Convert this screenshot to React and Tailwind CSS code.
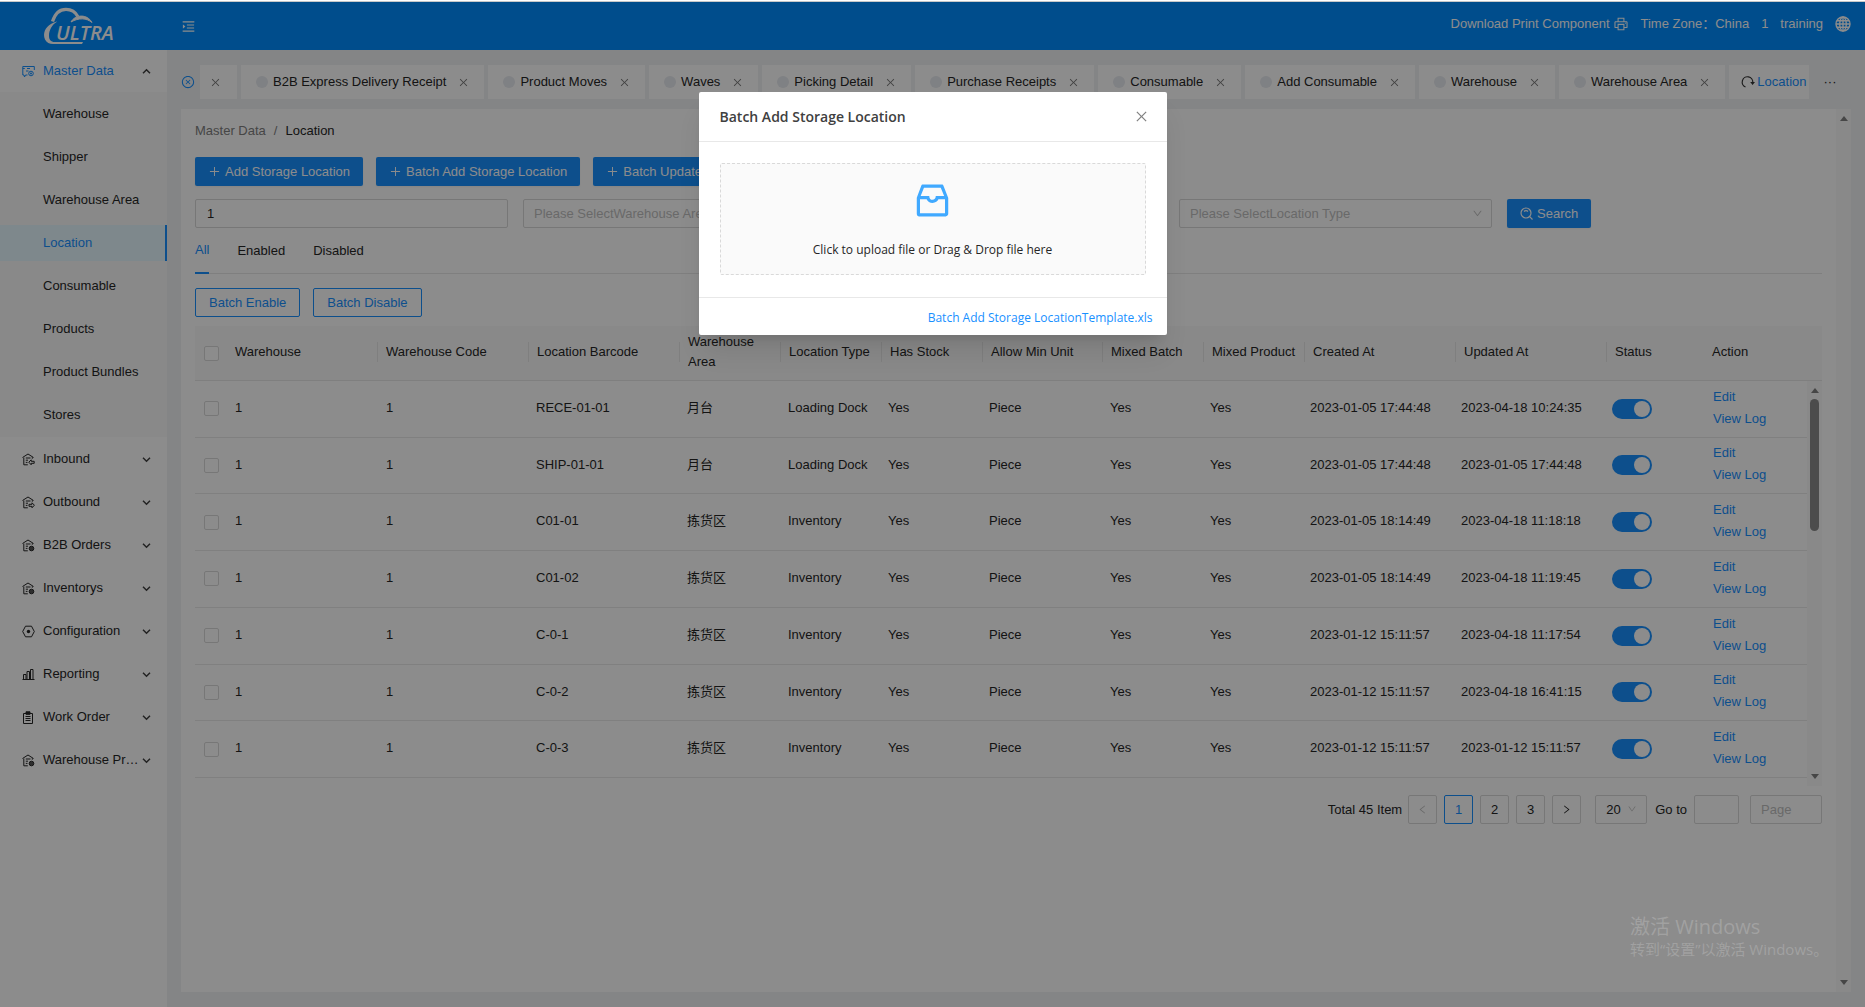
import React, { useState } from 'react';
import clsx from 'clsx';
import {
  AiOutlineClose,
  AiOutlineCloseCircle,
  AiOutlineDown,
  AiOutlineInbox,
  AiOutlineLeft,
  AiOutlineMenuUnfold,
  AiOutlinePlus,
  AiOutlinePrinter,
  AiOutlineRight,
} from 'react-icons/ai';

const SUB_MENU = ['Warehouse', 'Shipper', 'Warehouse Area', 'Location', 'Consumable', 'Products', 'Product Bundles', 'Stores'];

const MENU = [
  { label: 'Inbound', icon: HouseIcon, badge: 'in' },
  { label: 'Outbound', icon: HouseIcon, badge: 'out' },
  { label: 'B2B Orders', icon: HouseIcon, badge: 'dot' },
  { label: 'Inventorys', icon: HouseIcon, badge: 'dot' },
  { label: 'Configuration', icon: HexIcon },
  { label: 'Reporting', icon: BarsIcon },
  { label: 'Work Order', icon: ClipboardIcon },
  { label: 'Warehouse Pr…', icon: HouseIcon, badge: 'dot' },
];

const TABS = [
  'B2B Express Delivery Receipt',
  'Product Moves',
  'Waves',
  'Picking Detail',
  'Purchase Receipts',
  'Consumable',
  'Add Consumable',
  'Warehouse',
  'Warehouse Area',
];

const COLUMNS = [
  { title: 'Warehouse', head: 'w-[151px]', body: 'w-[151px]' },
  { title: 'Warehouse Code', head: 'w-[151px]', body: 'w-[150px]' },
  { title: 'Location Barcode', head: 'w-[151px]', body: 'w-[151px]' },
  { title: 'Warehouse Area', head: 'w-[101px]', body: 'w-[101px]' },
  { title: 'Location Type', head: 'w-[101px]', body: 'w-[100px]' },
  { title: 'Has Stock', head: 'w-[101px]', body: 'w-[101px]' },
  { title: 'Allow Min Unit', head: 'w-[120px]', body: 'w-[121px]' },
  { title: 'Mixed Batch', head: 'w-[101px]', body: 'w-[100px]' },
  { title: 'Mixed Product', head: 'w-[101px]', body: 'w-[100px]' },
  { title: 'Created At', head: 'w-[151px]', body: 'w-[151px]' },
  { title: 'Updated At', head: 'w-[151px]', body: 'w-[151px]' },
  { title: 'Status', head: 'w-[97px]', body: 'w-[101px]' },
];

const ROWS = [
  ['RECE-01-01', '月台', 'Loading Dock', '2023-01-05 17:44:48', '2023-04-18 10:24:35'],
  ['SHIP-01-01', '月台', 'Loading Dock', '2023-01-05 17:44:48', '2023-01-05 17:44:48'],
  ['C01-01', '拣货区', 'Inventory', '2023-01-05 18:14:49', '2023-04-18 11:18:18'],
  ['C01-02', '拣货区', 'Inventory', '2023-01-05 18:14:49', '2023-04-18 11:19:45'],
  ['C-0-1', '拣货区', 'Inventory', '2023-01-12 15:11:57', '2023-04-18 11:17:54'],
  ['C-0-2', '拣货区', 'Inventory', '2023-01-12 15:11:57', '2023-04-18 16:41:15'],
  ['C-0-3', '拣货区', 'Inventory', '2023-01-12 15:11:57', '2023-01-12 15:11:57'],
];

function Logo() {
  return (
    <svg width="74" height="40" viewBox="0 0 74 40" fill="none" aria-label="Ultra">
      <path d="M9.500 15.500C12 7.500 17 3.300 23 3.300c5.500 0 9.500 2.700 11.800 7.200" stroke="#fff" strokeWidth="3.200" />
      <path d="M28 16c4-7.500 16-8.500 21 .500-5.500-4.500-13-5-21-.5z" fill="#fff" stroke="#fff" />
      <path d="M14 15.500C3 18-1 27 2 33.500c1.500 3.300 4.500 4.500 8 4.500h29l1-2H12c-4.500 0-6-2.500-6-6.500 0-5 3-11 8-13.700z" fill="#fff" />
      <text x="13" y="34" fill="#fff" fontFamily="Open Sans, sans-serif" fontSize="20" fontStyle="italic" fontWeight="600">ULTRA</text>
    </svg>
  );
}

function Chevron({ up }) {
  return (
    <svg width="9" height="9" viewBox="0 0 9 9" fill="none" stroke="#404040" strokeWidth="1.500">
      <path d={up ? 'M1 6.300L4.500 2.800 8 6.300' : 'M1 2.700L4.500 6.200 8 2.700'} />
    </svg>
  );
}

function HouseIcon({ badge }) {
  return (
    <svg width="13" height="13" viewBox="0 0 13 13" fill="none" stroke="currentColor">
      <path d="M.5 4.500L6 1l5.500 3.500M1.800 4.500v7.300h4M3.800 5h4.700M3.800 7.200h2.200M3.800 9.400h1.700M10.300 4.200v1.500" />
      {badge === 'dot' && <circle cx="9.500" cy="9.500" r="2.300" fill="#555" stroke="currentColor" />}
      {badge === 'in' && <path d="M6.800 9.200L9.200 6.800v1.500h3v2h-3v1.500z" />}
      {badge === 'out' && <path d="M12.400 9.200L10 6.800v1.500H7v2h3v1.500z" />}
    </svg>
  );
}

function HexIcon() {
  return (
    <svg width="13" height="13" viewBox="0 0 13 13" fill="none" stroke="currentColor">
      <path d="M3.500 1.200h6L12.300 6.500 9.500 11.800h-6L.7 6.500z" strokeLinejoin="round" />
      <circle cx="6.500" cy="6.500" r="1.700" fill="currentColor" stroke="none" />
    </svg>
  );
}

function BarsIcon() {
  return (
    <svg width="13" height="13" viewBox="0 0 13 13" fill="none" stroke="currentColor">
      <path d="M.5 11.500h12M1.500 11.500V6.500H4v5M5 11.500V3.500h2.500v8M8.500 11.500V1.500h2.500v10" />
    </svg>
  );
}

function ClipboardIcon() {
  return (
    <svg width="13" height="13" viewBox="0 0 13 13" fill="none" stroke="currentColor">
      <path d="M1.500 2.500h9v10h-9zM3.500 5.500h5M3.500 7.500h5M3.500 9.500h5" />
      <path d="M4 .8h4v2.500H4z" fill="currentColor" />
    </svg>
  );
}

function MasterIcon() {
  return (
    <svg width="13" height="13" viewBox="0 0 13 13" fill="none" stroke="currentColor">
      <path d="M5.500 10H3.500l-1 2-.5-2H.8V1.500h11.500V5M.8 3.500h2M5 3.500h3M4 6h2.500" />
      <circle cx="9" cy="8.500" r="2.300" />
      <circle cx="9" cy="8.500" r="1" fill="currentColor" stroke="none" />
    </svg>
  );
}

function GlobeIcon() {
  return (
    <svg width="16" height="16" viewBox="0 0 16 16" fill="none" stroke="currentColor" strokeWidth="1.400">
      <circle cx="8" cy="8" r="7" />
      <ellipse cx="8" cy="8" rx="3.300" ry="7" />
      <path d="M8 1v14M1 8h14M2 4.800h12M2 11.200h12" />
    </svg>
  );
}

function ReloadIcon() {
  return (
    <svg width="14" height="14" viewBox="0 0 14 14" fill="none" stroke="#333" strokeWidth="1.200">
      <path d="M4.500 12A5.300 5.300 0 1 1 11.800 7.500" />
      <path d="M9.200 7h4.800l-2.400 3z" fill="#333" stroke="none" />
    </svg>
  );
}

function SearchIcon() {
  return (
    <svg width="13" height="13" viewBox="0 0 13 13" fill="none" stroke="currentColor" strokeWidth="1.200">
      <circle cx="6" cy="6" r="5" />
      <path d="M9.700 9.700l2.800 2.800M4 4.500c1-1.200 3-1.200 4 0" />
    </svg>
  );
}

function Arrow({ down }) {
  return (
    <svg width="8" height="5" viewBox="0 0 8 5" fill="#808080">
      <path d={down ? 'M0 0h8L4 5z' : 'M0 5h8L4 0z'} />
    </svg>
  );
}

function Header() {
  return (
    <header className="flex h-12 shrink-0 items-center bg-[#008cff] text-white">
      <a href="#" className="ml-[43px] w-[138px]"><Logo /></a>
      <button aria-label="Fold menu"><AiOutlineMenuUnfold size={15} /></button>
      <div className="mr-[14px] ml-auto flex h-11 items-center gap-3 self-start">
        <a href="#" className="flex items-center gap-[3px]">Download Print Component <AiOutlinePrinter size={16} /></a>
        <span>Time Zone：China</span>
        <span>1</span>
        <span>training</span>
        <button aria-label="Language"><GlobeIcon /></button>
      </div>
    </header>
  );
}

function Sidebar() {
  return (
    <nav className="w-[167px] shrink-0 bg-white">
      <a href="#" className="my-[3px] flex h-9 items-center pr-4 pl-[22px] text-[#1890ff]">
        <MasterIcon />
        <span className="ml-2 flex-1">Master Data</span>
        <Chevron up />
      </a>
      <div className="flex flex-col gap-[7px] bg-[#fafafa] py-1">
        {SUB_MENU.map((label) => (
          <a
            key={label}
            href="#"
            className={clsx('flex h-9 items-center pl-[43px]', label === 'Location' && 'border-r-2 border-[#1890ff] bg-[#e6f7ff] text-[#1890ff]')}
          >
            {label}
          </a>
        ))}
      </div>
      <div className="flex flex-col gap-[7px] py-1">
        {MENU.map(({ label, icon: Icon, badge }) => (
          <a key={label} href="#" className="flex h-9 items-center pr-4 pl-[22px]">
            <Icon badge={badge} />
            <span className="ml-2 flex-1 whitespace-nowrap">{label}</span>
            <Chevron />
          </a>
        ))}
      </div>
    </nav>
  );
}

function PageTabs() {
  return (
    <div className="flex h-[34px] shrink-0 items-center">
      <button aria-label="Close all" className="w-[19px] text-[#1890ff]"><AiOutlineCloseCircle size={14} /></button>
      <div className="flex flex-1 gap-1 overflow-hidden whitespace-nowrap">
        <div className="flex h-[34px] shrink-0 items-center bg-white pr-4 pl-[10px] text-[#777]">
          <button aria-label="Close"><AiOutlineClose size={11} /></button>
        </div>
        {TABS.map((tab) => (
          <div key={tab} className="flex h-[34px] shrink-0 items-center bg-white px-[15px]">
            <span className="mr-[5px] size-3 rounded-full bg-[#e8ebf0]" />
            <a href="#">{tab}</a>
            <button aria-label={`Close ${tab}`} className="ml-3 text-[#777]"><AiOutlineClose size={11} /></button>
          </div>
        ))}
        <div className="flex h-[34px] shrink-0 grow items-center gap-[2px] bg-white pl-3">
          <ReloadIcon />
          <a href="#" className="text-[#1890ff]">Location</a>
        </div>
      </div>
      <button aria-label="More tabs" className="w-[42px] text-center">···</button>
    </div>
  );
}

function PrimaryButton({ icon, children }) {
  return (
    <button className="flex h-[29px] items-center gap-1 rounded-xs bg-[#1890ff] px-[13px] whitespace-nowrap text-white shadow-xs">
      {icon}
      {children}
    </button>
  );
}

function FilterSelect({ placeholder }) {
  return (
    <div className="relative w-[313px]">
      <select aria-label={placeholder} className="h-[29px] w-full appearance-none rounded-xs border border-[#d9d9d9] bg-white px-[10px] text-[#bfbfbf]">
        <option>{placeholder}</option>
      </select>
      <AiOutlineDown size={11} className="pointer-events-none absolute top-[9px] right-[9px] text-[#bfbfbf]" />
    </div>
  );
}

function CheckBox({ label }) {
  return <input type="checkbox" aria-label={label} className="ml-[9px] block size-[15px] appearance-none rounded-xs border border-[#d9d9d9] bg-white checked:bg-[#1890ff]" />;
}

function Switch({ label }) {
  const [on, setOn] = useState(true);
  return (
    <button
      role="switch"
      aria-checked={on}
      aria-label={label}
      onClick={() => setOn(!on)}
      className={clsx('flex h-5 w-10 items-center rounded-full px-[2px]', on ? 'justify-end bg-[#1890ff]' : 'bg-gray-300')}
    >
      <span className="size-4 rounded-full bg-white" />
    </button>
  );
}

function LocationTable() {
  return (
    <div className="mt-[9px]">
      <table className="h-[55px] w-full table-fixed border-b border-[#e8e8e8] bg-[#fafafa] text-left">
        <colgroup>
          <col className="w-8" />
          {COLUMNS.map((c) => <col key={c.title} className={c.head} />)}
          <col />
        </colgroup>
        <thead>
          <tr>
            <th><CheckBox label="Select all" /></th>
            {COLUMNS.map((c) => (
              <th key={c.title} className="p-0 pb-[2px] font-normal">
                <div className="flex items-center justify-between pl-2 leading-5">
                  {c.title}
                  {c.title !== 'Status' && <span className="h-5 w-px shrink-0 bg-[#e8e8e8]" />}
                </div>
              </th>
            ))}
            <th className="pb-[2px] pl-2 font-normal">Action</th>
          </tr>
        </thead>
      </table>
      <div className="flex">
        <table className="h-[397px] w-full flex-1 table-fixed">
          <colgroup>
            <col className="w-8" />
            {COLUMNS.map((c) => <col key={c.title} className={c.body} />)}
            <col />
          </colgroup>
          <tbody>
            {ROWS.map(([code, area, type, created, updated]) => (
              <tr key={code} className="border-b border-[#eaeaea]">
                <td><CheckBox label={`Select ${code}`} /></td>
                {['1', '1', code, area, type, 'Yes', 'Piece', 'Yes', 'Yes', created, updated].map((value, i) => (
                  <td key={i} className="pb-[2px] pl-2 whitespace-nowrap">{value}</td>
                ))}
                <td className="pl-2"><Switch label={`Enable ${code}`} /></td>
                <td className="pb-[2px] pl-2 leading-[22px] text-[#1890ff]">
                  <a href="#" className="block">Edit</a>
                  <a href="#" className="block">View Log</a>
                </td>
              </tr>
            ))}
          </tbody>
        </table>
        <div className="flex h-[405px] w-[15px] flex-col items-center bg-[#fafafa] py-[7px]">
          <Arrow />
          <div className="mt-[6px] h-[132px] w-[9px] rounded-full bg-[#8a8a8a]" />
          <div className="mt-auto"><Arrow down /></div>
        </div>
      </div>
    </div>
  );
}

function Pagination() {
  const box = 'flex size-[29px] items-center justify-center rounded-xs border bg-white';
  return (
    <div className="mt-[9px] flex items-center justify-end">
      <span className="mr-[6px]">Total 45 Item</span>
      <div className="flex gap-[7px]">
        <button aria-label="Previous page" disabled className={clsx(box, 'border-[#d9d9d9] text-[#bfbfbf]')}><AiOutlineLeft size={11} /></button>
        <button className={clsx(box, 'border-[#1890ff] text-[#1890ff]')}>1</button>
        <button className={clsx(box, 'border-[#d9d9d9]')}>2</button>
        <button className={clsx(box, 'border-[#d9d9d9]')}>3</button>
        <button aria-label="Next page" className={clsx(box, 'border-[#d9d9d9]')}><AiOutlineRight size={11} /></button>
      </div>
      <div className="relative mr-2 ml-[14px]">
        <select aria-label="Page size" className="h-[29px] w-[52px] appearance-none rounded-xs border border-[#d9d9d9] bg-white pl-[10px]">
          <option>20</option>
        </select>
        <AiOutlineDown size={10} className="pointer-events-none absolute top-[9px] right-[10px] text-[#bfbfbf]" />
      </div>
      <label htmlFor="goto">Go to</label>
      <input id="goto" className="ml-[7px] h-[29px] w-[45px] rounded-xs border border-[#d9d9d9] bg-white px-2" />
      <input aria-label="Page" placeholder="Page" className="ml-[11px] h-[29px] w-[72px] rounded-xs border border-[#d9d9d9] bg-white px-[10px] placeholder:text-[#bfbfbf]" />
    </div>
  );
}

function LocationPage() {
  return (
    <div className="mt-[10px] flex min-h-0 flex-1 bg-white">
      <main className="min-w-0 flex-1 px-[14px]">
        <div className="mt-3 flex gap-2 leading-5">
          <a href="#" className="text-[#808080]">Master Data</a>
          <span className="text-[#808080]">/</span>
          <span>Location</span>
        </div>
        <div className="mt-4 flex gap-[13px]">
          <PrimaryButton icon={<AiOutlinePlus size={13} />}>Add Storage Location</PrimaryButton>
          <PrimaryButton icon={<AiOutlinePlus size={13} />}>Batch Add Storage Location</PrimaryButton>
          <PrimaryButton icon={<AiOutlinePlus size={13} />}>Batch Update</PrimaryButton>
        </div>
        <div className="mt-[13px] flex gap-[15px]">
          <input aria-label="Warehouse" defaultValue="1" className="h-[29px] w-[313px] rounded-xs border border-[#d9d9d9] bg-white px-[11px]" />
          <FilterSelect placeholder="Please SelectWarehouse Area" />
          <FilterSelect placeholder="Please Select" />
          <FilterSelect placeholder="Please SelectLocation Type" />
          <PrimaryButton icon={<SearchIcon />}>Search</PrimaryButton>
        </div>
        <div className="flex h-[46px] gap-7 border-b border-[#e8e8e8]">
          <button className="-mb-px border-b-2 border-[#1890ff] text-[#1890ff]">All</button>
          <button>Enabled</button>
          <button>Disabled</button>
        </div>
        <div className="mt-[14px] flex gap-[13px]">
          <button className="h-[29px] rounded-xs border border-[#1890ff] px-[13px] text-[#1890ff]">Batch Enable</button>
          <button className="h-[29px] rounded-xs border border-[#1890ff] px-[13px] text-[#1890ff]">Batch Disable</button>
        </div>
        <LocationTable />
        <Pagination />
      </main>
      <div className="flex w-[15px] flex-col items-center justify-between bg-[#fafafa] py-[7px]">
        <Arrow />
        <Arrow down />
      </div>
    </div>
  );
}

function UploadModal() {
  return (
    <div className="absolute inset-0 flex items-start justify-center bg-black/45 pt-[90px]">
      <div role="dialog" aria-label="Batch Add Storage Location" className="w-[468px] rounded-xs bg-white font-['Open_Sans','Noto_Sans',sans-serif] text-xs shadow-xl">
        <div className="flex h-[50px] items-center justify-between border-b border-[#e8e8e8] pr-[18px] pl-[21px]">
          <h2 className="text-sm font-semibold text-[#404040]">Batch Add Storage Location</h2>
          <button aria-label="Close dialog" className="text-[#808080]"><AiOutlineClose size={15} /></button>
        </div>
        <div className="px-[21px] pt-[21px] pb-[22px]">
          <button className="flex h-[112px] w-full flex-col items-center rounded-xs border border-dashed border-[#d9d9d9] bg-[#fafafa] pt-[15px]">
            <AiOutlineInbox size={43} className="text-[#40a9ff]" />
            <span className="mt-[18px] leading-5 text-[#262626]">Click to upload file or Drag &amp; Drop file here</span>
          </button>
        </div>
        <div className="flex h-[38px] items-center justify-end border-t border-[#e8e8e8] pt-[2px] pr-[14px]">
          <a href="#" className="text-[#1890ff]">Batch Add Storage LocationTemplate.xls</a>
        </div>
      </div>
    </div>
  );
}

export default function App() {
  return (
    <div className="flex h-screen flex-col overflow-hidden bg-[#f0f2f5] font-['Liberation_Sans','Noto_Sans_CJK_SC',sans-serif] text-[13px] text-[#262626]">
      <div className="h-[2px] shrink-0 border-b border-[#c8c8c8] bg-white" />
      <div className="relative flex min-h-0 flex-1 flex-col">
        <Header />
        <div className="flex min-h-0 flex-1">
          <Sidebar />
          <div className="flex min-w-0 flex-1 flex-col px-[14px] py-[15px]">
            <PageTabs />
            <LocationPage />
          </div>
        </div>
        <UploadModal />
        <div className="pointer-events-none absolute right-10 bottom-12 w-[195px] font-['Open_Sans','Noto_Sans_CJK_SC',sans-serif] whitespace-nowrap text-white/20">
          <p className="text-xl leading-6">激活 Windows</p>
          <p className="text-[15px] leading-5">转到“设置”以激活 Windows。</p>
        </div>
      </div>
    </div>
  );
}
